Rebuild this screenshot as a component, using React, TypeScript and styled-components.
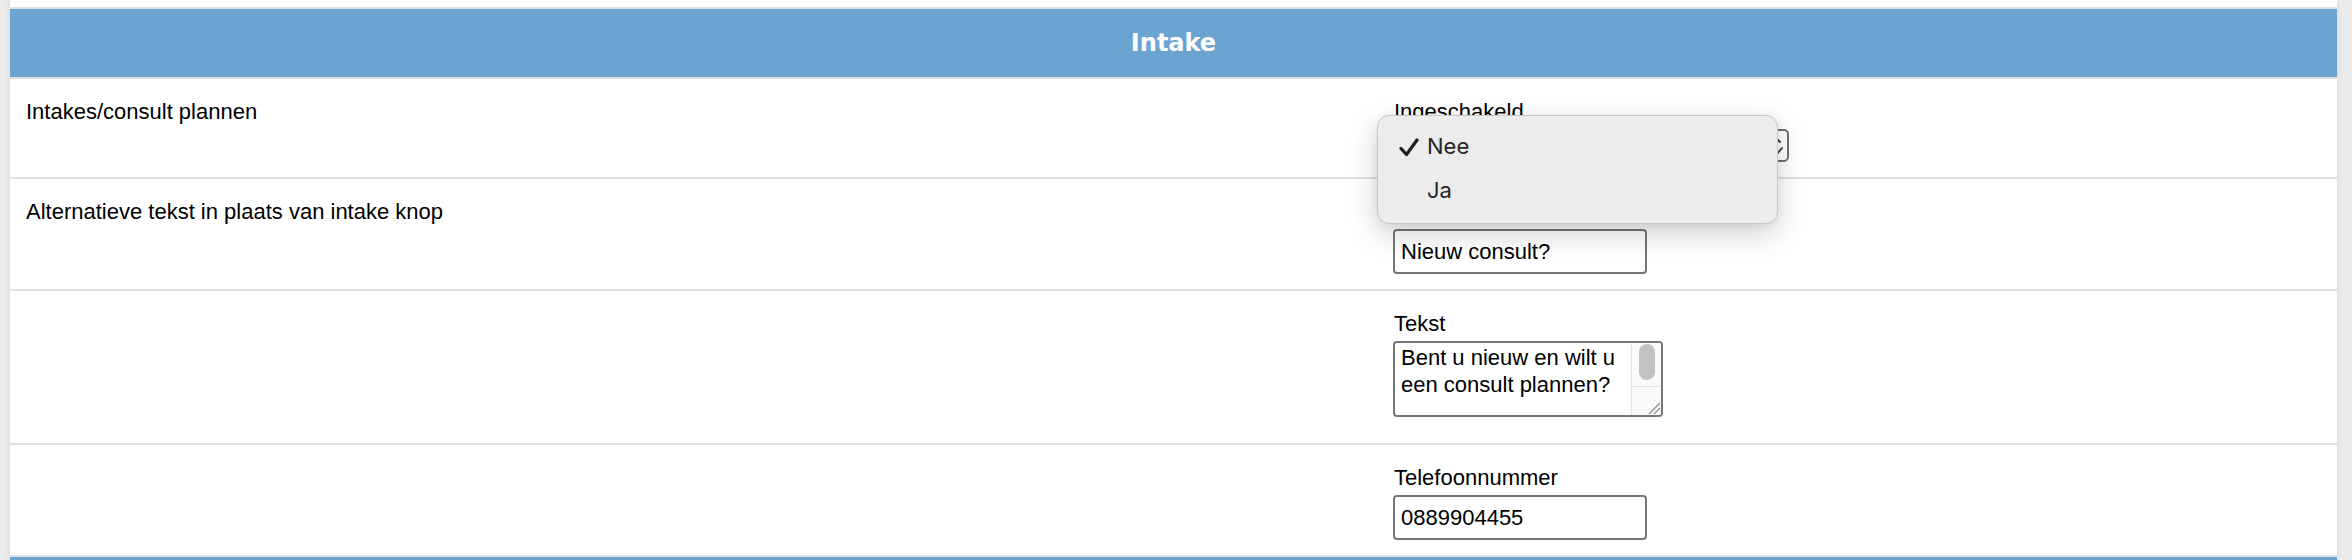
import React from 'react';
import styled, { createGlobalStyle } from 'styled-components';

const GlobalStyle = createGlobalStyle`
  html, body {
    margin: 0;
    padding: 0;
    background: #ebebeb;
  }
  body {
    font-family: "Liberation Sans", Arial, sans-serif;
    color: #000;
  }
`;

const Page = styled.div`
  height: 100vh;
  overflow: hidden;
  display: flex;
  padding: 0 15px 0 10px;
  box-sizing: border-box;
  background: #ebebeb;
`;

const Panel = styled.main`
  flex: 1;
  background: #fff;
  padding-top: 7px;
  box-shadow: 0 0 6px rgba(0, 0, 0, 0.09);
`;

const Table = styled.div`
  border-top: 2px solid #dde1e5;
`;

const SectionHeader = styled.h2`
  margin: 0;
  height: 68px;
  display: flex;
  align-items: center;
  justify-content: center;
  background: #6ba4d0;
  color: #fff;
  font: bold 24px "DejaVu Sans", Verdana, sans-serif;
  border-bottom: 2px solid #dde1e5;
`;

const Row = styled.div`
  display: grid;
  grid-template-columns: 1368px 1fr;
  border-bottom: 2px solid #dee2e6;
`;

const Cell = styled.div`
  padding: 20px 16px 15px;
  font-size: 22px;
  line-height: 26px;
`;

const FieldLabel = styled.label`
  display: block;
  margin-bottom: 4px;
`;

const TextInput = styled.input`
  display: block;
  box-sizing: border-box;
  width: 254px;
  height: 45px;
  margin: 0 0 0 -1px;
  padding: 0 6px;
  border: 2px solid #767676;
  border-radius: 4px;
  background: #fff;
  color: #000;
  font: 22px "Liberation Sans", Arial, sans-serif;
  outline: none;
`;

const SelectWrap = styled.div`
  position: relative;
  margin-left: -1px;
`;

const SelectBox = styled.div`
  box-sizing: border-box;
  width: 396px;
  height: 33px;
  display: flex;
  align-items: center;
  justify-content: space-between;
  padding: 0 4px 0 8px;
  border: 2px solid #6f6f6f;
  border-radius: 5px;
  background: #fff;
  svg {
    display: block;
  }
`;

const Menu = styled.ul`
  position: absolute;
  left: -16px;
  top: -14px;
  z-index: 10;
  box-sizing: border-box;
  width: 401px;
  margin: 0;
  padding: 8px 0 11px;
  list-style: none;
  background: #ececec;
  border: 1px solid #c9c9c9;
  border-radius: 12px;
  box-shadow: 0 10px 30px rgba(0, 0, 0, 0.18), 0 2px 8px rgba(0, 0, 0, 0.06);
  font: 22px Inter, "Noto Sans", sans-serif;
  color: #262626;
`;

const MenuItem = styled.li`
  position: relative;
  height: 44px;
  line-height: 44px;
  padding-left: 49px;
  svg {
    position: absolute;
    left: 21px;
    top: 14px;
  }
`;

const TextArea = styled.div`
  box-sizing: border-box;
  width: 270px;
  height: 76px;
  margin: 0 0 11px -1px;
  display: flex;
  border: 2px solid #767676;
  border-radius: 4px;
  background: #fff;
  overflow: hidden;
`;

const TextAreaContent = styled.div`
  flex: 1;
  padding: 1px 4px 0 6px;
  line-height: 27px;
  overflow: hidden;
`;

const ScrollBar = styled.div`
  width: 29px;
  display: flex;
  flex-direction: column;
  border-left: 1px solid #e4e4e4;
  background: #fafafa;
`;

const ScrollTrack = styled.div`
  height: 43px;
  display: flex;
  justify-content: center;
  padding-top: 1px;
  box-sizing: border-box;
`;

const ScrollThumb = styled.div`
  width: 16px;
  height: 36px;
  border-radius: 8px;
  background: #c2c2c2;
`;

const ResizeCorner = styled.div`
  flex: 1;
  border-top: 1px solid #e4e4e4;
  display: flex;
  align-items: flex-end;
  justify-content: flex-end;
  svg {
    display: block;
  }
`;

const CheckIcon = () => (
  <svg width="20" height="19" viewBox="0 0 20 19">
    <path d="M2 10.5 L7.5 16.5 L18 2" fill="none" stroke="#1f1f1f" strokeWidth="3.2" strokeLinecap="round" strokeLinejoin="round" />
  </svg>
);

const Chevron = () => (
  <svg width="14" height="22" viewBox="0 0 14 22">
    <path d="M3 7 L7 3 L11 7" fill="none" stroke="#333" strokeWidth="1.8" strokeLinecap="round" strokeLinejoin="round" />
    <path d="M1 13 L7 20 L13 13" fill="none" stroke="#333" strokeWidth="1.8" strokeLinecap="round" strokeLinejoin="round" />
  </svg>
);

const Grip = () => (
  <svg width="14" height="14" viewBox="0 0 14 14">
    <path d="M2 13 L13 2 M7 13 L13 7" stroke="#8a8a8a" strokeWidth="1.2" />
  </svg>
);

export default function App() {
  return (
    <>
      <GlobalStyle />
      <Page>
        <Panel>
          <Table>
            <SectionHeader>Intake</SectionHeader>

            <Row>
              <Cell>Intakes/consult plannen</Cell>
              <Cell>
                <FieldLabel>Ingeschakeld</FieldLabel>
                <SelectWrap>
                  <SelectBox>
                    <span>Nee</span>
                    <Chevron />
                  </SelectBox>
                  <Menu>
                    <MenuItem>
                      <CheckIcon />
                      Nee
                    </MenuItem>
                    <MenuItem>Ja</MenuItem>
                  </Menu>
                </SelectWrap>
              </Cell>
            </Row>

            <Row>
              <Cell>Alternatieve tekst in plaats van intake knop</Cell>
              <Cell>
                <FieldLabel>Knoptekst</FieldLabel>
                <TextInput defaultValue="Nieuw consult?" />
              </Cell>
            </Row>

            <Row>
              <Cell />
              <Cell>
                <FieldLabel>Tekst</FieldLabel>
                <TextArea>
                  <TextAreaContent>Bent u nieuw en wilt u een consult plannen?</TextAreaContent>
                  <ScrollBar>
                    <ScrollTrack>
                      <ScrollThumb />
                    </ScrollTrack>
                    <ResizeCorner>
                      <Grip />
                    </ResizeCorner>
                  </ScrollBar>
                </TextArea>
              </Cell>
            </Row>

            <Row>
              <Cell />
              <Cell>
                <FieldLabel>Telefoonnummer</FieldLabel>
                <TextInput defaultValue="0889904455" />
              </Cell>
            </Row>

            <SectionHeader aria-hidden="true" />
          </Table>
        </Panel>
      </Page>
    </>
  );
}
